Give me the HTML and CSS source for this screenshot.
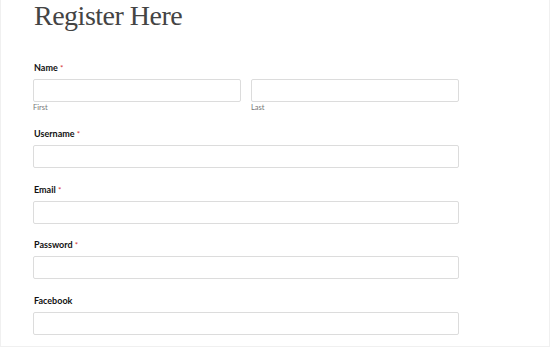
FILE: index.html
```
<!DOCTYPE html>
<html lang="en">
<head>
    <meta charset="UTF-8">
    <meta name="viewport" content="width=device-width, initial-scale=1.0">
    <title>Register Here</title>
    <link rel="stylesheet" href="styles.css">
</head>
<body>
    <div class="page">
        <h1 class="title">Register Here</h1>
        <form class="form" onsubmit="event.preventDefault();">
            <!-- Nombre en dos columnas -->
            <div class="field">
                <label class="field-label">Name <span class="req">*</span></label>
                <div class="row">
                    <div class="col">
                        <input type="text" class="input" id="firstName">
                        <span class="sublabel">First</span>
                    </div>
                    <div class="col">
                        <input type="text" class="input" id="lastName">
                        <span class="sublabel">Last</span>
                    </div>
                </div>
            </div>

            <div class="field">
                <label class="field-label" for="username">Username <span class="req">*</span></label>
                <input type="text" class="input" id="username">
            </div>

            <div class="field">
                <label class="field-label" for="email">Email <span class="req">*</span></label>
                <input type="email" class="input" id="email">
            </div>

            <div class="field">
                <label class="field-label" for="password">Password <span class="req">*</span></label>
                <input type="password" class="input" id="password">
            </div>

            <div class="field">
                <label class="field-label" for="facebook">Facebook</label>
                <input type="text" class="input" id="facebook">
            </div>
        </form>
    </div>
</body>
</html>
```

FILE: styles.css
```
html, body {
    margin: 0;
    padding: 0;
    background: #fff;
}
body {
    font-family: Lato, "Open Sans", Arial, sans-serif;
    -webkit-font-smoothing: antialiased;
}
.page {
    width: 550px;
    height: 347px;
    box-sizing: border-box;
    border: 1px solid #f0f0f0;
    border-top: 0;
    padding-left: 32px;
    overflow: hidden;
}
.title {
    margin: 0;
    padding-left: 1px;
    font-family: "Liberation Serif", "Times New Roman", serif;
    font-weight: 400;
    font-size: 28px;
    line-height: 32px;
    letter-spacing: -0.5px;
    color: #444;
}
.form {
    width: 426px;
    margin-top: 30px;
}
.field { margin-bottom: 15.4px; }
.field-label {
    display: block;
    padding-left: 1px;
    margin-bottom: 5px;
    font-size: 9px;
    line-height: 12px;
    font-weight: 700;
    color: #111;
}
.req {
    color: #d63638;
    font-weight: 400;
    font-size: 8px;
}
.row {
    display: flex;
    gap: 10px;
}
.col { flex: 1; }
.input {
    display: block;
    width: 100%;
    height: 23px;
    margin: 0;
    padding: 0 6px;
    box-sizing: border-box;
    border: 1px solid #dcdcdc;
    border-radius: 2px;
    background: #fff;
    font-size: 10px;
}
.input:focus { outline: 0; border-color: #aaa; }
.sublabel {
    display: block;
    margin-top: 1px;
    font-size: 7.5px;
    line-height: 10px;
    color: #777;
}
```
